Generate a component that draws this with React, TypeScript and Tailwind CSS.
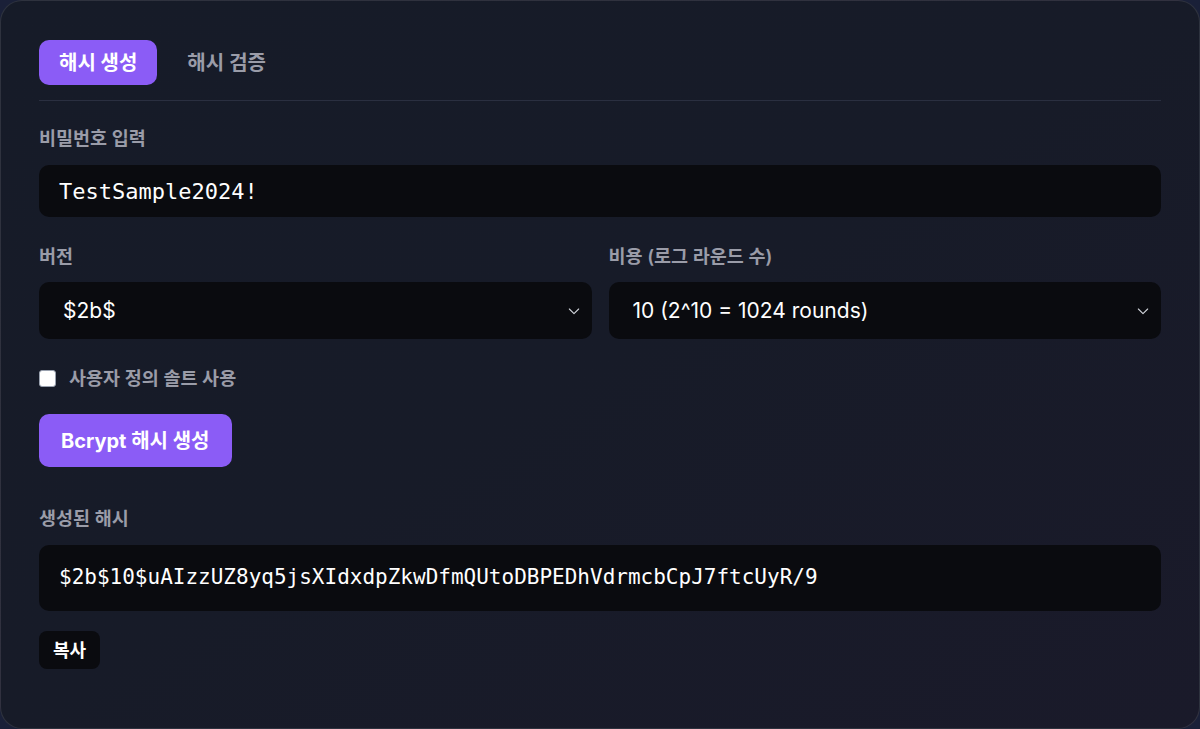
import { useState } from "react";

const sans = { fontFamily: '"Inter", "Noto Sans CJK KR", sans-serif' };
const mono = { fontFamily: '"DejaVu Sans Mono", "Liberation Mono", monospace' };

function Chevron() {
  return (
    <svg width="16" height="16" viewBox="0 0 24 24" fill="none" stroke="currentColor" strokeWidth="1.6" strokeLinecap="round" strokeLinejoin="round">
      <polyline points="5 9 12 16 19 9" />
    </svg>
  );
}

function Select({ value }: { value: string }) {
  return (
    <div className="flex h-[57px] items-center justify-between rounded-[10px] bg-[#0a0b0f] pl-[24px] pr-[10px] text-[21px] text-white">
      <span>{value}</span>
      <span className="text-gray-300">
        <Chevron />
      </span>
    </div>
  );
}

export default function App() {
  const [tab, setTab] = useState<"gen" | "verify">("gen");
  const [custom, setCustom] = useState(false);

  return (
    <div className="h-[729px] w-[1200px] overflow-hidden bg-[#1a2038]" style={sans}>
      <div className="h-full w-full rounded-[22px] border border-white/10 bg-gradient-to-br from-[#161b28] via-[#171b28] to-[#1a1a2a] px-[38px] pt-[39px]">
        {/* Tabs */}
        <div className="flex items-center gap-[30px] border-b border-[#2a2f40] pb-[15px]">
          <button
            onClick={() => setTab("gen")}
            className={`h-[45px] rounded-[10px] px-[20px] text-[20px] font-bold ${tab === "gen" ? "bg-[#8b5cf6] text-white" : "text-[#9a9ca8]"}`}
          >
            해시 생성
          </button>
          <button
            onClick={() => setTab("verify")}
            className={`h-[45px] rounded-[10px] text-[20px] font-semibold ${tab === "verify" ? "bg-[#8b5cf6] px-[20px] text-white" : "text-[#9a9ca8]"}`}
          >
            해시 검증
          </button>
        </div>

        {/* Password */}
        <div className="mt-[25px] text-[18.5px] font-semibold leading-[24px] text-[#9a9ca8]">비밀번호 입력</div>
        <div className="mt-[15px] flex h-[52px] items-center rounded-[10px] bg-[#0a0b0f] px-[20px] text-[22px] text-white" style={mono}>
          TestSample2024!
        </div>

        {/* Version + cost */}
        <div className="mt-[27px] grid grid-cols-2 gap-[17px]">
          <div>
            <div className="text-[18.5px] font-semibold leading-[24px] text-[#9a9ca8]">버전</div>
            <div className="mt-[14px]">
              <Select value="$2b$" />
            </div>
          </div>
          <div>
            <div className="text-[18.5px] font-semibold leading-[24px] text-[#9a9ca8]">비용 (로그 라운드 수)</div>
            <div className="mt-[14px]">
              <Select value="10 (2^10 = 1024 rounds)" />
            </div>
          </div>
        </div>

        {/* Custom salt */}
        <label className="mt-[27px] flex h-[24px] items-center gap-[13px] text-[18.5px] font-semibold leading-[24px] text-[#9a9ca8]">
          <input
            type="checkbox"
            checked={custom}
            onChange={(e) => setCustom(e.target.checked)}
            className="h-[17px] w-[17px] appearance-none rounded-[3px] border border-gray-400 bg-white"
          />
          사용자 정의 솔트 사용
        </label>

        <button className="mt-[24px] block h-[53px] rounded-[10px] bg-[#8b5cf6] px-[22px] text-[20px] font-bold text-white">
          Bcrypt 해시 생성
        </button>

        {/* Result */}
        <div className="mt-[39px] text-[18.5px] font-semibold leading-[24px] text-[#9a9ca8]">생성된 해시</div>
        <div className="mt-[15px] flex h-[66px] items-center rounded-[10px] bg-[#0a0b0f] px-[20px] text-[21px] text-white" style={mono}>
          $2b$10$uAIzzUZ8yq5jsXIdxdpZkwDfmQUtoDBPEDhVdrmcbCpJ7ftcUyR/9
        </div>
        <button className="mt-[20px] block h-[38px] rounded-[8px] bg-[#0a0b0f] px-[14px] text-[18px] font-bold text-white">
          복사
        </button>
      </div>
    </div>
  );
}
